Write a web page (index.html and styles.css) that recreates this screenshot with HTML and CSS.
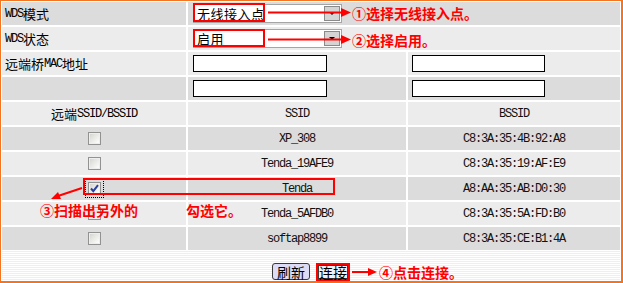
FILE: index.html
```html
<!DOCTYPE html>
<html>
	<head>
		<meta charset="utf-8" />
		<title>WDS设置</title>
		<link rel="stylesheet" href="styles.css">
	</head>
	<body>
		<div class="stage">
			<div id="panel">
				<div class="grid">
					<div class="cell label"><span class="en">WDS</span>模式</div>
					<div class="cell span2">
						<div class="select"><span class="val">无线接入点</span><span class="drop"></span></div>
					</div>

					<div class="cell light label"><span class="en">WDS</span>状态</div>
					<div class="cell light span2">
						<div class="select"><span class="val">启用</span><span class="drop"></span></div>
					</div>

					<div class="cell light label">远端桥<span class="en">MAC</span>地址</div>
					<div class="cell light"><input type="text" class="mac" /></div>
					<div class="cell light"><input type="text" class="mac mac2" /></div>

					<div class="cell label"></div>
					<div class="cell"><input type="text" class="mac" /></div>
					<div class="cell"><input type="text" class="mac mac2" /></div>

					<div class="cell light mid">远端<span class="en">SSID/BSSID</span></div>
					<div class="cell light mid mono">SSID</div>
					<div class="cell light mid mono">BSSID</div>

					<div class="cell mid"><span class="chk"></span></div>
					<div class="cell mid mono">XP_308</div>
					<div class="cell mid mono">C8:3A:35:4B:92:A8</div>

					<div class="cell light mid"><span class="chk"></span></div>
					<div class="cell light mid mono">Tenda_19AFE9</div>
					<div class="cell light mid mono">C8:3A:35:19:AF:E9</div>

					<div class="cell mid"><span class="chk on"><svg width="11" height="11" viewBox="0 0 11 11"><path d="M2 5.5 L4.3 8.2 L9 2.2" fill="none" stroke="#2a3f9e" stroke-width="2"/></svg></span></div>
					<div class="cell mid mono">Tenda</div>
					<div class="cell mid mono">A8:AA:35:AB:D0:30</div>

					<div class="cell light mid"><span class="chk"></span></div>
					<div class="cell light mid mono">Tenda_5AFDB0</div>
					<div class="cell light mid mono">C8:3A:35:5A:FD:B0</div>

					<div class="cell mid"><span class="chk"></span></div>
					<div class="cell mid mono">softap8899</div>
					<div class="cell mid mono">C8:3A:35:CE:B1:4A</div>
				</div>
				<div class="foot">
					<button type="button" class="btn">刷新</button>
					<span class="hl"><button type="button" class="btn">连接</button></span>
				</div>
			</div>

			<div class="notes">
				<svg width="623" height="283" viewBox="0 0 623 283">
					<g fill="none" stroke="#f00" stroke-width="2">
						<rect x="194" y="4" width="70" height="17"/>
						<rect x="194" y="30" width="70" height="16"/>
						<rect x="84" y="179" width="250" height="15"/>
						<line x1="268" y1="12.5" x2="343" y2="12.5"/>
						<line x1="268" y1="39.5" x2="343" y2="39.5"/>
						<line x1="82" y1="188" x2="58" y2="196"/>
						<line x1="352" y1="272" x2="370" y2="272"/>
					</g>
					<g fill="#f00">
						<polygon points="341,8 351,12.5 341,17"/>
						<polygon points="341,35 351,39.5 341,44"/>
						<polygon points="51,199 58,192 61,199"/>
						<polygon points="368,268 377,272 368,276"/>
					</g>
				</svg>
				<span class="note n1">①选择无线接入点。</span>
				<span class="note n2">②选择启用。</span>
				<span class="note n3">③扫描出另外的</span>
				<span class="note n3b">勾选它。</span>
				<span class="note n4">④点击连接。</span>
			</div>
		</div>
	</body>
</html>
```

FILE: styles.css
```css
*{margin:0;padding:0;box-sizing:border-box}
body{font-family:"Noto Sans CJK SC",sans-serif;font-size:13px;color:#000;background:#fff}
input,button{outline:none;font-family:inherit}

.stage{position:relative;width:623px;height:283px}
#panel{height:283px;border:solid #f5741f;border-width:1px 2px 2px 1px;padding:1px 1px 0 1px;background:#fff}

.grid{display:grid;grid-template-columns:184px 218px 1fr;grid-auto-rows:23px;gap:2px}
.cell{display:flex;align-items:center;background:#dcdcdc;line-height:16px}
.cell.light{background:#ececec}
.label{padding-left:3px}
.span2{grid-column:span 2}
.mid{justify-content:center}
.en,.mono{font-family:"Liberation Mono",monospace;font-size:12px;letter-spacing:-1.2px}
.mono{color:#111}

.select{margin-left:5px;width:149px;height:19px;border:1px solid #a5a5a5;background:#fff;
	display:flex;align-items:center;justify-content:space-between}
.val{padding-left:3px;letter-spacing:.5px;font-size:13px}
.drop{width:16px;height:15px;margin-right:1px;background:#d4d4d4;border:1px solid #8a8a8a;
	display:flex;align-items:center;justify-content:center}
.drop::after{content:"";width:0;height:0;border-left:3px solid transparent;border-right:3px solid transparent;border-top:3px solid #000}

.mac{margin-left:5px;width:134px;height:17px;border:1px solid #000;background:#fff}
.mac2{margin-left:4px;width:133px}

.chk{width:13px;height:13px;border:1px solid #929292;background:linear-gradient(135deg,#d2d2cc,#fbfbfb 85%);
	box-shadow:inset 0 0 0 1px #eee;display:flex;align-items:center;justify-content:center}
.chk.on{outline:1px dotted #000;outline-offset:2px}
.chk svg{display:block}

.foot{height:31px;display:flex;justify-content:center;align-items:flex-end;gap:6px;
	background:repeating-linear-gradient(#fff 0 1px,#efefef 1px 2px)}
.btn{height:17px;padding:0 4px;border:1px solid #3a3a3a;border-radius:3px;background:#dcdcf6;
	font-size:14px;line-height:14px;color:#000;margin-bottom:1px}
.hl{display:flex;border:2px solid #f00}
.hl .btn{height:14px;padding:0;border-radius:0;background:#f0f0fa;margin:0;line-height:12px}

.notes{position:absolute;left:0;top:0;width:623px;height:283px;pointer-events:none}
.notes svg{display:block}
.note{position:absolute;color:#f00;font-size:14px;line-height:16px;font-weight:bold;white-space:nowrap}
.n1{left:352px;top:5px}
.n2{left:352px;top:32px}
.n3{left:40px;top:202px}
.n3b{left:186px;top:202px}
.n4{left:379px;top:264px}
```
